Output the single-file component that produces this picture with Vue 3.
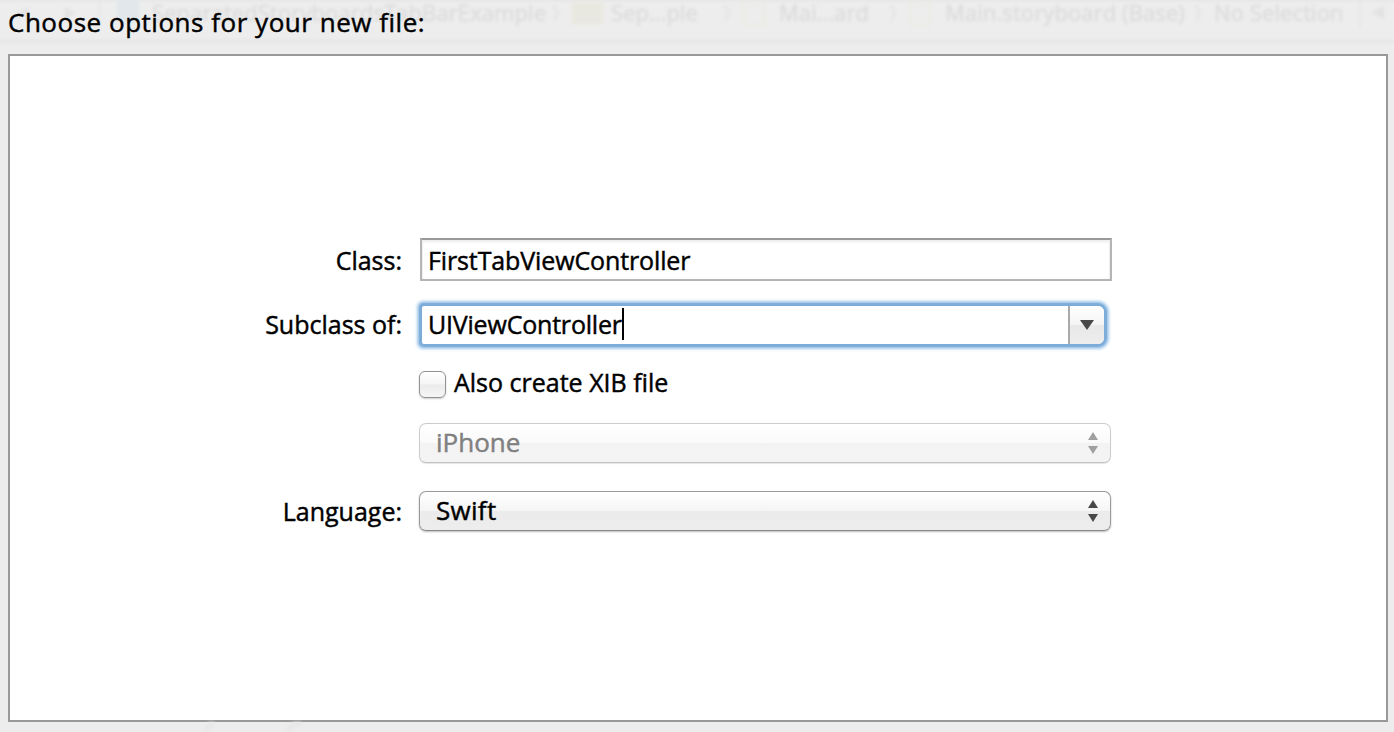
<script setup>
import { ref } from 'vue'

const className = ref('FirstTabViewController')
const superclass = ref('UIViewController')
const crumbs = [
  { icon: 'project', text: 'SeparatedStoryboardsTabBarExample', kind: 'c1' },
  { icon: 'folder', text: 'Sep…ple', kind: 'c2' },
  { icon: 'doc', text: 'Mai…ard', kind: 'c3' },
  { icon: 'doc', text: 'Main.storyboard (Base)', kind: 'c4' },
  { icon: '', text: 'No Selection', kind: 'c5' }
]
</script>

<template>
  <main class="sheet">
    <div class="backdrop" aria-hidden="true">
      <svg class="nav" width="100" height="30" viewBox="0 0 100 30">
        <path d="M28 7 18 13l10 6zM65 7l10 6-10 6z" />
        <path d="M99 0h1v28h-1z" />
      </svg>
      <div v-for="c in crumbs" :key="c.kind" class="crumb" :class="c.kind">
        <i v-if="c.icon" class="icon" :class="c.icon"></i>
        <span>{{ c.text }}</span>
        <svg v-if="c.kind !== 'c5'" class="chev" width="8" height="24" viewBox="0 0 8 24"><path d="m1 6 4 7-4 8" /></svg>
      </div>
      <svg class="end" width="38" height="30" viewBox="0 0 38 30">
        <path class="line" d="M3 0h2v28H3z" /><path d="M28 6v13l-13-6.500z" />
      </svg>
    </div>

    <header class="title"><span class="t-title">Choose options for your new file:</span></header>

    <section class="panel">
      <div class="row row-class">
        <label><span class="t-class">Class:</span></label>
        <div class="field"><span class="t-name">{{ className }}</span></div>
      </div>

      <div class="row row-sub">
        <label><span class="t-sub">Subclass of:</span></label>
        <div class="combo">
          <div class="combo-text"><span class="t-super">{{ superclass }}</span><i class="caret"></i></div>
          <div class="combo-btn">
            <svg width="14" height="10" viewBox="0 0 14 10"><path d="M0 0h14L7 10z" /></svg>
          </div>
        </div>
      </div>

      <div class="row row-check">
        <i class="box"></i>
        <span class="t-xib">Also create XIB file</span>
      </div>

      <div class="row row-device">
        <div class="popup disabled">
          <span class="t-iphone">iPhone</span>
          <svg width="10" height="22" viewBox="0 0 10 22"><path d="M0 8 5 0l5 8zM0 14h10l-5 8z" /></svg>
        </div>
      </div>

      <div class="row row-lang">
        <label><span class="t-lang">Language:</span></label>
        <div class="popup">
          <span class="t-swift">Swift</span>
          <svg width="10" height="22" viewBox="0 0 10 22"><path d="M0 8 5 0l5 8zM0 14h10l-5 8z" /></svg>
        </div>
      </div>
    </section>

    <svg class="streaks" width="120" height="10" viewBox="0 0 120 10" aria-hidden="true">
      <path d="M12 0 4 10M100 0Q90 4 86 10" />
    </svg>
  </main>
</template>

<style>
body { margin: 0; background: #ededed; }
</style>

<style scoped>
.sheet {
  position: relative;
  box-sizing: border-box;
  width: 1394px;
  height: 732px;
  padding: 0 6px 0 8px;
  overflow: hidden;
  display: flex;
  flex-direction: column;
  background: #ededed;
  color: #000;
  font: 400 25px/36px "Open Sans", "Noto Sans", sans-serif;
  -webkit-text-stroke: 0.45px currentColor;
  white-space: nowrap;
}
.sheet * { box-sizing: border-box; }

.backdrop {
  position: absolute;
  inset: 0 0 auto 0;
  height: 54px;
  display: flex;
  align-items: flex-start;
  background: linear-gradient(#e8e8e8 0 1px, #ededed 3px 37px, #e9e9e9 40px 43px, #ededed 46px);
  color: #dcdcdc;
  font-size: 22px;
  line-height: 24px;
}
.backdrop svg { flex: none; fill: #e2e2e2; filter: blur(1.5px); }
.crumb { display: flex; flex: none; height: 30px; filter: blur(1.4px); }
.crumb span { flex: none; letter-spacing: 0.1px; }
.crumb .chev { margin-left: auto; margin-right: 11px; fill: none; stroke: #e3e3e3; stroke-width: 2; filter: none; }
.icon { flex: none; height: 22px; }
.project { width: 22px; margin: 0 13px 0 17px; background: #e1e7ea; }
.folder { width: 31px; margin: 2px 8px 0 0; background: #e9e8e0; }
.doc { width: 22px; height: 24px; margin: 2px 14px 0 0; border: 2px solid #ebeae4; }
.c1 { width: 472px; }
.c2 { width: 171px; }
.c3 { width: 166px; }
.c4 { width: 305px; }
.c5 { width: 142px; }
.end { margin-left: auto; }
.backdrop .line { fill: #e7e7e7; }

.title { position: relative; flex: none; height: 54px; padding-top: 4px; font-size: 26px; }
.t-title { letter-spacing: 0.52px; }

.panel {
  position: relative;
  flex: none;
  height: 668px;
  padding-top: 182px;
  border: 2px solid #999;
  background: #fff;
}
.row { display: flex; align-items: flex-start; }
label { width: 392px; flex: none; display: flex; justify-content: flex-end; padding-top: 4px; }
.row-class { height: 66px; }
.row-sub { height: 66px; }
.row-sub label { padding-top: 2px; }
.row-lang label { padding-top: 2px; }
.row-check { height: 53px; padding-left: 409px; }
.row-device { height: 68px; padding-left: 409px; }

.field {
  width: 692px;
  height: 43px;
  margin-left: 18px;
  padding: 2px 6px;
  border: 2px solid #b5b5b5;
  border-top-color: #999;
  background: linear-gradient(#ececec, #fff 4px);
  box-shadow: inset 1px 0 1px #eee, inset -1px 0 1px #eee;
}
.t-name { letter-spacing: -0.12px; }
.combo {
  display: flex;
  width: 682px;
  height: 38px;
  margin: 2px 0 0 20px;
  border-radius: 2px 6px 6px 2px;
  background: #fff;
  box-shadow: 0 0 1px 3px #7dacd9, 0 0 3px 5px #a1c8ea;
}
.combo-text { display: flex; flex: 1; padding: 0 0 0 6px; }
.t-super { letter-spacing: -0.2px; }
.caret { width: 2px; height: 32px; margin: 2px 0 0 0; background: #000; }
.combo-btn {
  width: 36px;
  display: flex;
  align-items: center;
  padding-left: 10px;
  border-left: 2px solid #aaa;
  border-radius: 0 6px 6px 0;
  background: linear-gradient(#fff, #f4f4f4 50%, #e8e8e8 51%, #ededed);
}
svg { fill: #484848; }

.box {
  flex: none;
  width: 27px;
  height: 27px;
  margin: 1px 8px 0 0;
  border: 1.5px solid #929292;
  border-radius: 6px;
  background: linear-gradient(#fff, #f5f5f5 49%, #ebebeb 51%, #f6f6f6);
  box-shadow: 0 1px 2px #ccc;
}
.row-check > span { margin-top: -6px; }

.popup {
  display: flex;
  justify-content: space-between;
  align-items: center;
  width: 692px;
  height: 40px;
  padding: 0 12px 0 16px;
  border: 1.5px solid #999;
  border-bottom-color: #888;
  border-radius: 7px;
  background: linear-gradient(#fff, #f5f5f5 49%, #ebebeb 51%, #ededed);
  box-shadow: 0 1px 2px #bbb;
  font-size: 26px;
}
.popup span { margin-top: -3px; }
.t-swift { letter-spacing: 0.3px; }
.row-lang .popup { margin-left: 17px; }
.popup.disabled {
  border-color: #ccc;
  border-bottom-color: #c2c2c2;
  background: linear-gradient(#fff, #fafafa 49%, #f3f3f3 51%, #f4f4f4);
  box-shadow: 0 1px 1px #e5e5e5;
  color: #808080;
}
.popup.disabled svg { fill: #a0a0a0; }

.streaks {
  flex: none;
  margin-left: 193px;
  fill: none;
  stroke: #e8e8e8;
  stroke-width: 6;
  filter: blur(1.5px);
}
</style>
